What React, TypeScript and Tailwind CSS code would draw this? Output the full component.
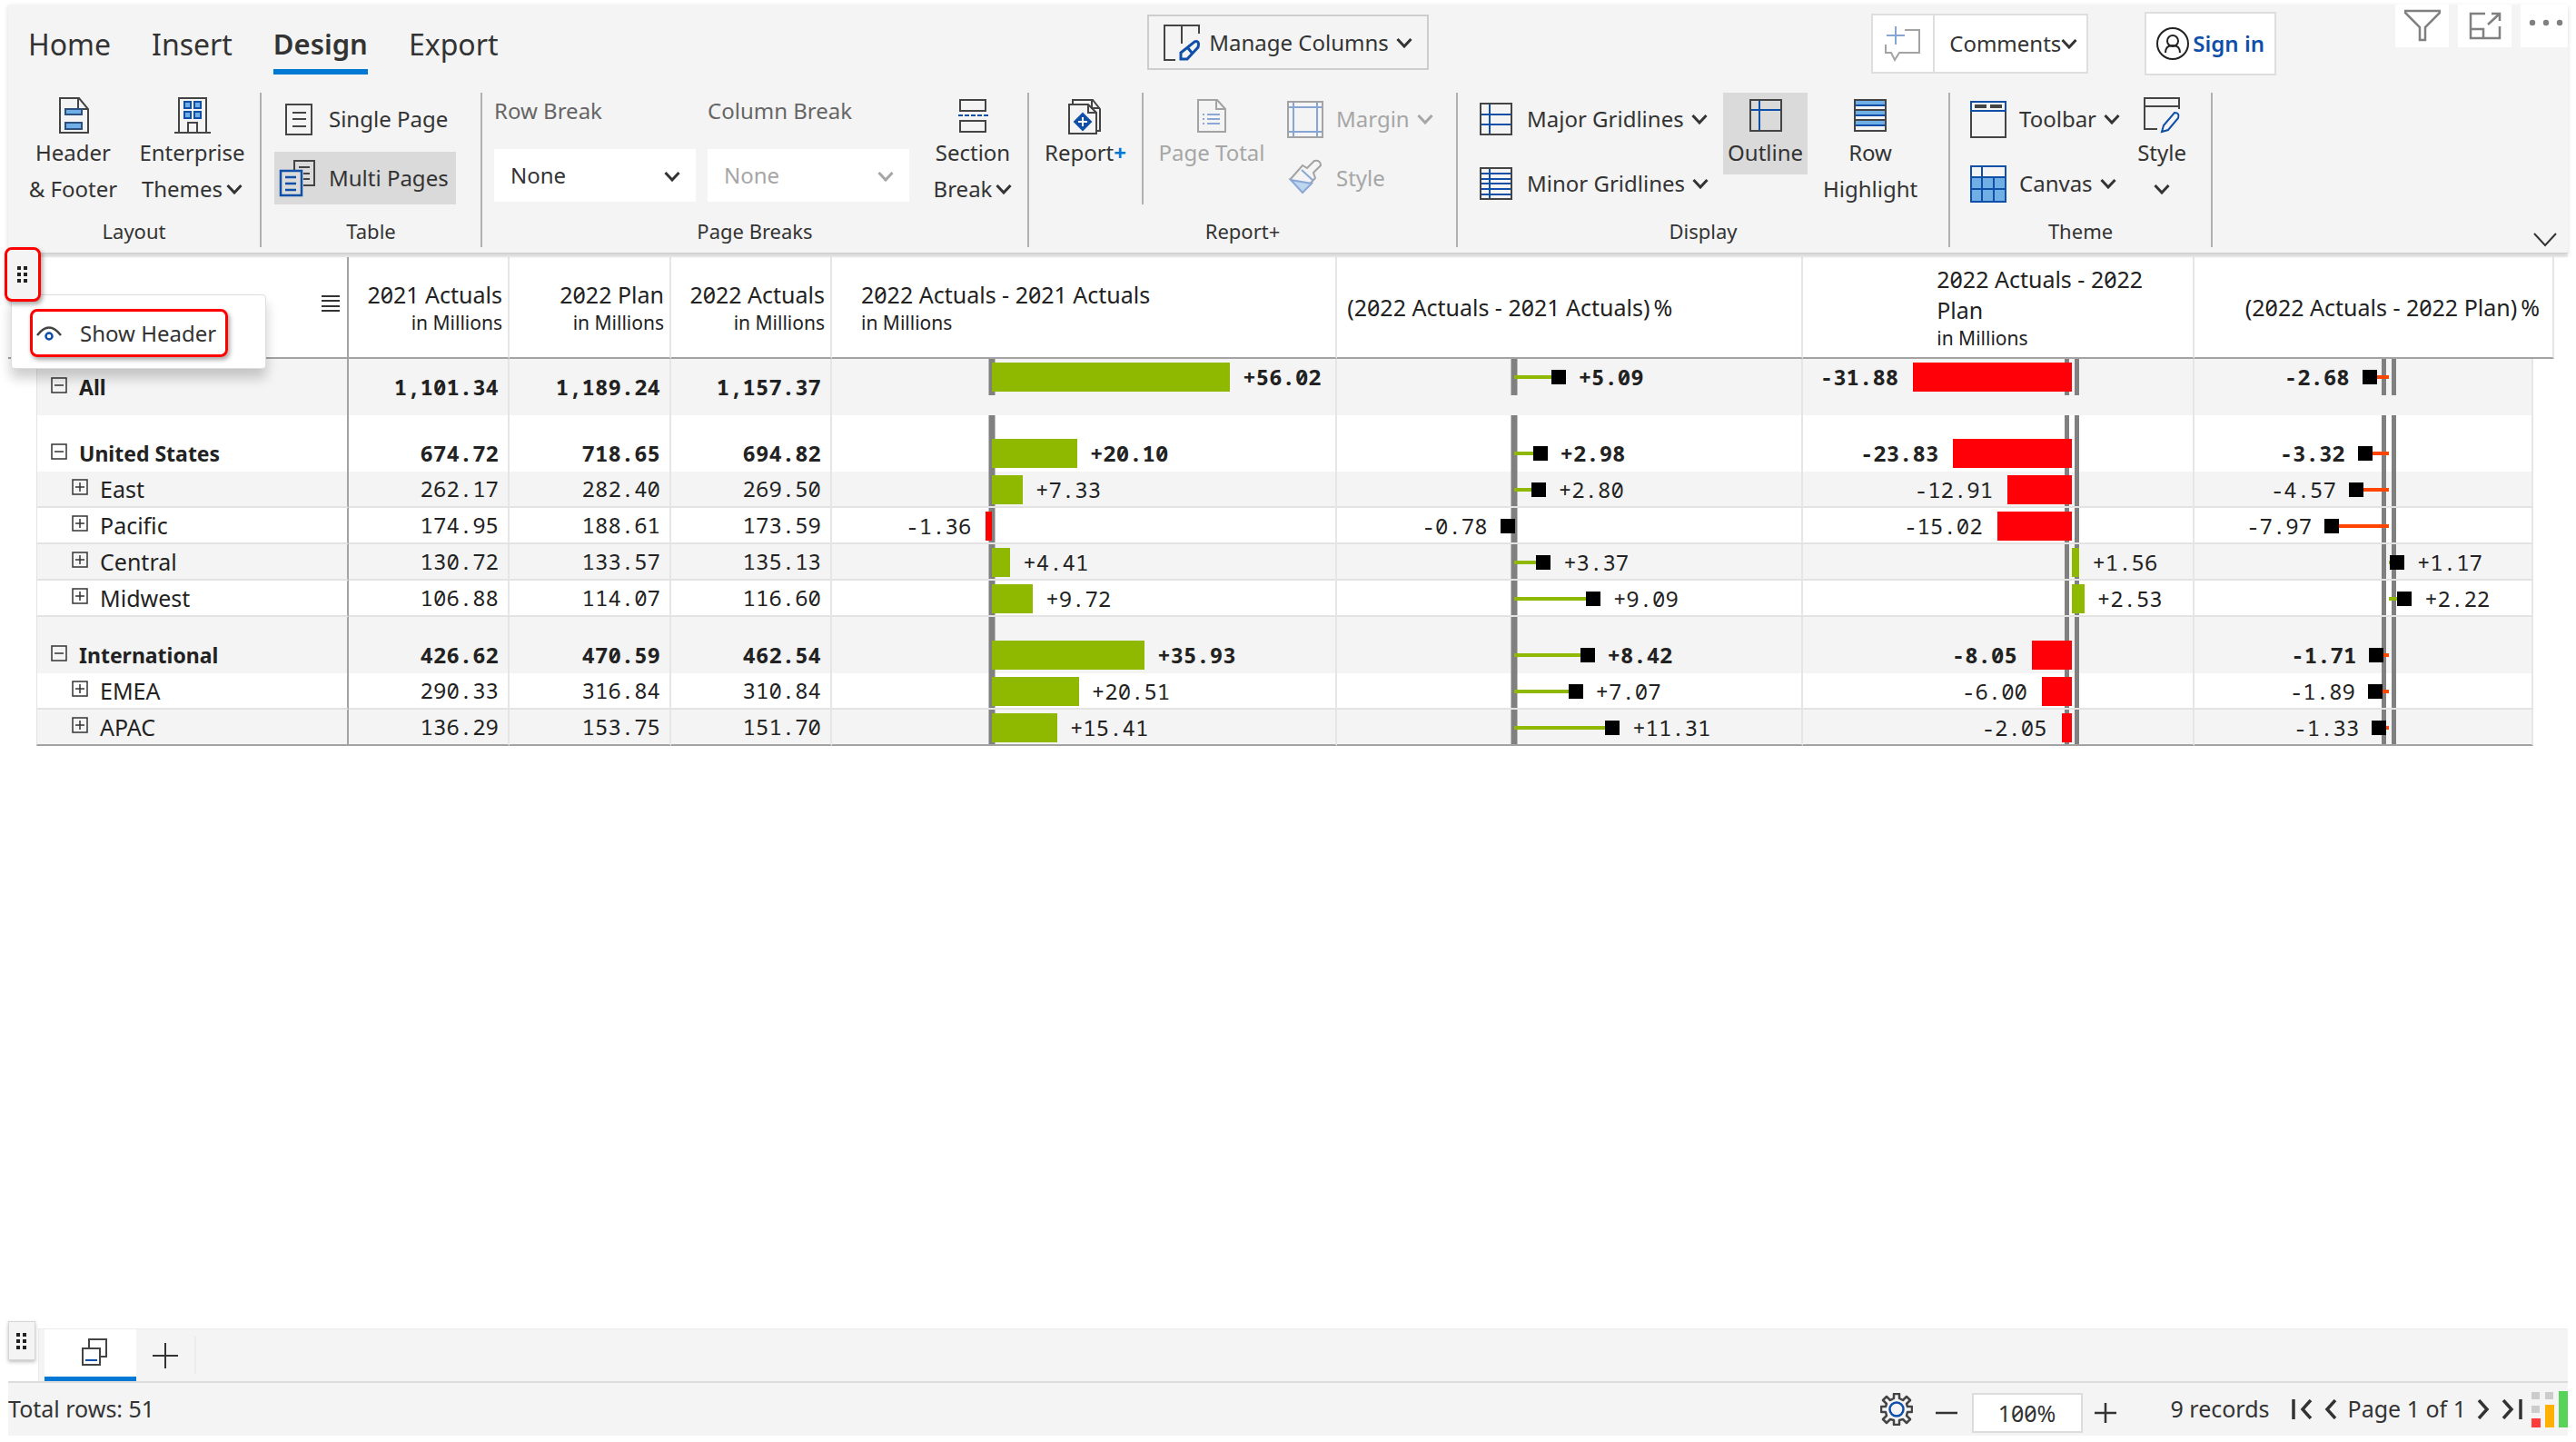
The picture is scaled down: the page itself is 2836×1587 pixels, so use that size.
import React from "react";

const INK = "#444444";
const BLUE = "#0f4fa8";
const SKY = "#70aee6";

type IconProps = { children: React.ReactNode; className?: string };

function Icon({ children, className = "" }: IconProps) {
  return (
    <svg
      aria-hidden="true"
      viewBox="0 0 40 40"
      fill="none"
      stroke={INK}
      strokeWidth="2"
      className={`size-10 shrink-0 overflow-visible ${className}`}
    >
      {children}
    </svg>
  );
}

function Chevron({ className = "" }: { className?: string }) {
  return (
    <svg
      aria-hidden="true"
      viewBox="0 0 18 12"
      fill="none"
      stroke="currentColor"
      strokeWidth="3"
      className={`h-3 w-[18px] shrink-0 ${className}`}
    >
      <path d="M1.5 2 9 10 16.5 2" />
    </svg>
  );
}

function Grip() {
  return (
    <svg aria-hidden="true" viewBox="0 0 12 18" fill="#222" className="h-[18px] w-3">
      {[0, 7, 14].map((y) => (
        <g key={y}>
          <rect x="0" y={y} width="4" height="4" />
          <rect x="7" y={y} width="4" height="4" />
        </g>
      ))}
    </svg>
  );
}

/* ---------- ribbon icons ---------- */

const HeaderFooterIcon = () => (
  <Icon>
    <path d="M5 1H26L36 13V39H5ZM25 1V13H36" />
    <g fill={SKY} stroke="#2b4f80">
      <rect x="11" y="13" width="18" height="6" />
      <rect x="11" y="28" width="18" height="7" />
    </g>
  </Icon>
);

const EnterpriseIcon = () => (
  <Icon>
    <path d="M0 39H40M5 39V1H35V39M15 39V28H25V39" />
    <g fill={SKY} stroke={BLUE}>
      <rect x="11" y="5" width="7" height="7" />
      <rect x="22" y="5" width="7" height="7" />
      <rect x="11" y="16" width="7" height="7" />
      <rect x="22" y="16" width="7" height="7" />
    </g>
  </Icon>
);

const SinglePageIcon = () => (
  <Icon>
    <path d="M7 4H35V37H7ZM14 13H29M14 20H29M14 28H29" />
  </Icon>
);

const MultiPagesIcon = () => (
  <Icon>
    <path d="M16 11V1H38V28H26M21 8H33M26 15H33M26 21H33" />
    <path d="M1 12H24V39H1ZM6 19H18M6 26H18M6 33H18" stroke={BLUE} strokeWidth="2.5" />
  </Icon>
);

const SectionBreakIcon = () => (
  <Icon>
    <rect x="6" y="3" width="28" height="12" />
    <rect x="6" y="26" width="28" height="12" />
    <path d="M4 20H37" stroke={BLUE} strokeDasharray="5 2" />
  </Icon>
);

const ReportPlusIcon = () => (
  <Icon>
    <path d="M6 7V3H28L36 13V37H32" />
    <path d="M27 3V12H36" />
    <path d="M2 8H23L32 17V40H2ZM23 8V17H32" fill="#f4f4f4" />
    <path d="M17 18 26 27 17 36 8 27Z" fill={BLUE} stroke={BLUE} />
    <path d="M17 22V32M12 27H22" stroke="#fff" />
  </Icon>
);

const PageTotalIcon = () => (
  <Icon>
    <path d="M5 3H26L35 13V38H5ZM25 3V13H35" stroke="#a3a3a3" />
    <path d="M10 19H12M15 19H29M10 24H12M15 24H29M10 29H12M15 29H29" stroke="#8aa7d6" />
  </Icon>
);

const MarginIcon = () => (
  <Icon>
    <rect x="1" y="1" width="38" height="39" stroke="#a3a3a3" />
    <path d="M7 2V39M33 2V39M2 7H38M2 34H38" stroke="#86a5d4" />
  </Icon>
);

const BrushIcon = () => (
  <Icon>
    <path d="M3 22 17 6 22 9 30 1Q37 0 37 6L29 14 31 20 18 34" stroke="#a3a3a3" />
    <path d="M16 11 29 23" stroke="#8aa7d6" />
    <path d="M4 22 27 26 17 36Z" fill="#bcd6f0" stroke="#8aa7d6" />
  </Icon>
);

const MajorGridIcon = () => (
  <Icon>
    <path d="M13 3V37M3 15H37M3 26H37" stroke={BLUE} />
    <rect x="3" y="3" width="34" height="34" />
  </Icon>
);

const MinorGridIcon = () => (
  <Icon>
    <path d="M13 3V37M3 9H37M3 15H37M3 20H37M3 26H37M3 32H37" stroke={BLUE} />
    <rect x="3" y="3" width="34" height="34" />
  </Icon>
);

const OutlineIcon = () => (
  <Icon>
    <path d="M13 3V37M3 14H37" stroke={BLUE} />
    <rect x="3" y="3" width="34" height="34" />
  </Icon>
);

const RowHighlightIcon = () => (
  <Icon>
    <g fill={SKY} stroke="none">
      <rect x="3" y="3" width="34" height="6" />
      <rect x="3" y="14" width="34" height="6" />
      <rect x="3" y="25" width="34" height="6" />
    </g>
    <path d="M3 14H37M3 25H37" />
    <path d="M3 9H37M3 20H37M3 31H37" stroke={BLUE} />
    <rect x="3" y="3" width="34" height="34" />
  </Icon>
);

const ToolbarIcon = () => (
  <Icon>
    <rect x="1" y="11" width="38" height="29" />
    <rect x="1" y="1" width="38" height="10" stroke={BLUE} />
    <path d="M5 6H18M22 6H35" strokeWidth="4" />
  </Icon>
);

const CanvasIcon = () => (
  <Icon>
    <rect x="1" y="13" width="38" height="27" fill={SKY} stroke="none" />
    <path d="M1 1H39V40H1ZM13 1V40M26 13V40M1 13H39M1 26H39" stroke={BLUE} />
  </Icon>
);

const PageStyleIcon = () => (
  <Icon>
    <path d="M39 13V1H1V35H15M1 10H39" />
    <path d="M20 38 22 31 34 17Q40 17 38 23L27 36Z" stroke={BLUE} />
  </Icon>
);

const ManageIcon = () => (
  <Icon>
    <path d="M39 10V1H1V39H13M20 1V21" />
    <path d="M19 38V31L34 19Q40 17 38 25L26 38ZM27 26 31 31" stroke={BLUE} strokeWidth="3" />
  </Icon>
);

/* ---------- ribbon building blocks ---------- */

type TallButtonProps = {
  icon: React.ReactNode;
  lines: React.ReactNode[];
  className?: string;
  disabled?: boolean;
};

function TallButton({ icon, lines, className = "", disabled }: TallButtonProps) {
  return (
    <button
      type="button"
      disabled={disabled}
      className={`flex shrink-0 flex-col items-center self-start pt-[5px] leading-10 whitespace-nowrap disabled:text-[#a6a6a6] ${className}`}
    >
      <span className="mb-px">{icon}</span>
      {lines.map((line, i) => (
        <span key={i} className="flex items-center gap-1">
          {line}
        </span>
      ))}
    </button>
  );
}

type RowButtonProps = {
  icon: React.ReactNode;
  label: string;
  menu?: boolean;
  active?: boolean;
  disabled?: boolean;
  className?: string;
};

function RowButton({ icon, label, menu, active, disabled, className = "" }: RowButtonProps) {
  return (
    <button
      type="button"
      disabled={disabled}
      className={`flex h-[58px] shrink-0 items-center gap-3.5 whitespace-nowrap disabled:text-[#a6a6a6] ${
        active ? "bg-[#dadada]" : ""
      } ${className}`}
    >
      {icon}
      <span className="flex items-center gap-2">
        {label}
        {menu && <Chevron />}
      </span>
    </button>
  );
}

function Group({ label, className = "", children }: { label: string; className?: string; children: React.ReactNode }) {
  return (
    <section
      aria-label={label}
      className={`flex h-[170px] shrink-0 flex-col justify-between border-r-2 border-[#b0b0b0] ${className}`}
    >
      <div className="flex h-[130px]">{children}</div>
      <div className="text-center text-[22px] leading-9">{label}</div>
    </section>
  );
}

function BreakSelect({ label, id, disabled }: { label: string; id: string; disabled?: boolean }) {
  return (
    <div className="w-[222px]">
      <label htmlFor={id} className="block leading-10 text-[#666]">
        {label}
      </label>
      <div className="relative mt-[22px]">
        <select
          id={id}
          disabled={disabled}
          className="h-[58px] w-full appearance-none bg-white pl-[18px] disabled:text-[#a6a6a6] disabled:opacity-100"
        >
          <option>None</option>
        </select>
        <Chevron className={`pointer-events-none absolute top-6 right-[17px] ${disabled ? "text-[#a6a6a6]" : ""}`} />
      </div>
    </div>
  );
}

function Ribbon() {
  const tabs = ["Home", "Insert", "Design", "Export"];
  return (
    <header className="relative z-10 border-b border-[#cfcfcf] bg-[#f4f4f4] text-2xl text-[#333] shadow-[0_2px_5px_rgba(0,0,0,0.15)]">
      <div className="grid h-[97px] grid-cols-[1fr_auto_1fr] items-start">
        <nav className="flex gap-[45px] pt-4 pl-[22px] text-[32px]">
          {tabs.map((tab) => (
            <a
              key={tab}
              href={`#${tab.toLowerCase()}`}
              className={
                tab === "Design"
                  ? "border-b-[6px] border-[#0078d4] text-[31px] leading-[55px] font-semibold"
                  : "leading-[55px]"
              }
            >
              {tab}
            </a>
          ))}
        </nav>

        <button type="button" className="mt-[11px] flex h-[61px] items-center gap-2.5 border-2 border-[#cdcdcd] px-4">
          <ManageIcon />
          <span className="flex items-center gap-2">
            Manage Columns
            <Chevron />
          </span>
        </button>

        <div className="flex items-start justify-end whitespace-nowrap">
          <div className="mt-[10px] mr-[62px] flex h-[66px] border-2 border-[#dedede] bg-white">
            <button type="button" aria-label="Add comment" className="flex w-[68px] items-center justify-center border-r-2 border-[#dedede]">
              <Icon>
                <path d="M22 5H38V30H16L11 38 7 30H1V21" stroke="#a3a3a3" />
                <path d="M12 1V21M2 11H22" stroke="#86a5d4" />
              </Icon>
            </button>
            <button type="button" className="flex items-center px-[10px] pl-4">
              Comments
              <Chevron />
            </button>
          </div>
          <button type="button" className="mt-2 mr-[131px] flex h-[70px] items-center gap-1 border-2 border-[#dedede] bg-white px-[11px] font-semibold text-[#0f4fa8]">
            <svg aria-hidden="true" viewBox="0 0 36 36" fill="none" stroke="#222" strokeWidth="2" className="size-9">
              <circle cx="18" cy="18" r="17" />
              <circle cx="18" cy="15" r="6" />
              <path d="M10 28Q10 20 18 20T26 28" />
            </svg>
            Sign in
          </button>
          <div className="flex gap-[10px] text-[#808080]">
            <button type="button" aria-label="Filter" className="flex h-[47px] w-[59px] justify-center bg-white pt-[5px]">
              <svg aria-hidden="true" viewBox="0 0 40 36" fill="none" stroke="currentColor" strokeWidth="2.5" className="h-9 w-10">
                <path d="M1 2H39V4L23 20V34H17V20L1 4Z" />
              </svg>
            </button>
            <button type="button" aria-label="Focus mode" className="flex h-[47px] w-[59px] justify-center bg-white pt-2">
              <svg aria-hidden="true" viewBox="0 0 36 31" fill="none" stroke="currentColor" strokeWidth="2.5" className="h-[31px] w-9">
                <path d="M18 2H2V29H34V16M2 19H16V29M25 2H34V10M34 2 21 14" />
              </svg>
            </button>
            <button type="button" aria-label="More options" className="flex h-[47px] w-[52px] justify-center bg-white pt-[15px] pl-1">
              <svg aria-hidden="true" viewBox="0 0 38 10" fill="currentColor" className="h-[10px] w-[38px]">
                <circle cx="4" cy="5" r="3.2" />
                <circle cx="19" cy="5" r="3.2" />
                <circle cx="34" cy="5" r="3.2" />
              </svg>
            </button>
          </div>
        </div>
      </div>

      <div className="flex pb-[6px]">
        <Group label="Layout" className="w-[279px]">
          <TallButton icon={<HeaderFooterIcon />} lines={["Header", "& Footer"]} className="ml-1.5 w-[131px]" />
          <TallButton
            icon={<EnterpriseIcon />}
            lines={["Enterprise", <React.Fragment key="t">Themes <Chevron /></React.Fragment>]}
            className="w-[131px]"
          />
        </Group>

        <Group label="Table" className="w-[243px]">
          <div className="flex flex-col gap-[7px] pl-3.5">
            <RowButton icon={<SinglePageIcon />} label="Single Page" className="w-[200px] pl-1.5" />
            <RowButton icon={<MultiPagesIcon />} label="Multi Pages" active className="w-[200px] pl-1.5" />
          </div>
        </Group>

        <Group label="Page Breaks" className="w-[602px]">
          <div className="flex gap-[13px] pl-[13px]">
            <BreakSelect label="Row Break" id="row-break" />
            <BreakSelect label="Column Break" id="column-break" disabled />
            <TallButton
              icon={<SectionBreakIcon />}
              lines={["Section", <React.Fragment key="b">Break <Chevron /></React.Fragment>]}
              className="w-[114px]"
            />
          </div>
        </Group>

        <Group label="Report+" className="w-[472px]">
          <div className="h-[123px] w-[126px] border-r-2 border-[#b0b0b0]">
            <TallButton
              icon={<ReportPlusIcon />}
              lines={[
                <span key="r">
                  Report<span className="font-bold text-[#0078d4]">+</span>
                </span>,
              ]}
              className="w-[124px]"
            />
          </div>
          <TallButton icon={<PageTotalIcon />} lines={["Page Total"]} disabled className="w-[150px]" />
          <div className="flex flex-col gap-[7px] pl-2">
            <RowButton icon={<MarginIcon />} label="Margin" menu disabled />
            <RowButton icon={<BrushIcon />} label="Style" disabled />
          </div>
        </Group>

        <Group label="Display" className="w-[542px]">
          <div className="mr-4 flex flex-col gap-[13px] pl-[22px]">
            <RowButton icon={<MajorGridIcon />} label="Major Gridlines" menu />
            <RowButton icon={<MinorGridIcon />} label="Minor Gridlines" menu />
          </div>
          <TallButton icon={<OutlineIcon />} lines={["Outline"]} className="w-[93px] bg-[#dadada] pb-1" />
          <TallButton icon={<RowHighlightIcon />} lines={["Row", "Highlight"]} className="w-[138px]" />
        </Group>

        <Group label="Theme" className="w-[289px]">
          <div className="flex flex-col gap-[13px] pl-[22px]">
            <RowButton icon={<ToolbarIcon />} label="Toolbar" menu />
            <RowButton icon={<CanvasIcon />} label="Canvas" menu />
          </div>
          <TallButton
            icon={<PageStyleIcon />}
            lines={["Style", <Chevron key="c" className="my-[14px]" />]}
            className="w-[92px]"
          />
        </Group>

        <button type="button" aria-label="Collapse ribbon" className="mr-3 ml-auto self-end">
          <svg aria-hidden="true" viewBox="0 0 26 16" fill="none" stroke="#333" strokeWidth="2" className="h-4 w-[26px]">
            <path d="M1 1 13 14 25 1" />
          </svg>
        </button>
      </div>
    </header>
  );
}

/* ---------- table ---------- */

type Row = {
  name: string;
  level: 0 | 1;
  place: "top" | "bottom" | "plain";
  values: [string, string, string];
  deltas: [string, string, string, string];
};

const rows: Row[] = [
  { name: "All", level: 0, place: "top", values: ["1,101.34", "1,189.24", "1,157.37"], deltas: ["+56.02", "+5.09", "-31.88", "-2.68"] },
  { name: "United States", level: 0, place: "bottom", values: ["674.72", "718.65", "694.82"], deltas: ["+20.10", "+2.98", "-23.83", "-3.32"] },
  { name: "East", level: 1, place: "plain", values: ["262.17", "282.40", "269.50"], deltas: ["+7.33", "+2.80", "-12.91", "-4.57"] },
  { name: "Pacific", level: 1, place: "plain", values: ["174.95", "188.61", "173.59"], deltas: ["-1.36", "-0.78", "-15.02", "-7.97"] },
  { name: "Central", level: 1, place: "plain", values: ["130.72", "133.57", "135.13"], deltas: ["+4.41", "+3.37", "+1.56", "+1.17"] },
  { name: "Midwest", level: 1, place: "plain", values: ["106.88", "114.07", "116.60"], deltas: ["+9.72", "+9.09", "+2.53", "+2.22"] },
  { name: "International", level: 0, place: "bottom", values: ["426.62", "470.59", "462.54"], deltas: ["+35.93", "+8.42", "-8.05", "-1.71"] },
  { name: "EMEA", level: 1, place: "plain", values: ["290.33", "316.84", "310.84"], deltas: ["+20.51", "+7.07", "-6.00", "-1.89"] },
  { name: "APAC", level: 1, place: "plain", values: ["136.29", "153.75", "151.70"], deltas: ["+15.41", "+11.31", "-2.05", "-1.33"] },
];

/* origin and scale are percentages of the column's width */
type Chart = { kind: "bar" | "pin"; origin: number; scale: number; double: boolean; loss: string };

const charts: Chart[] = [
  { kind: "bar", origin: 31.7, scale: 0.846, double: false, loss: "bg-[#ff0000]" },
  { kind: "pin", origin: 38.1, scale: 1.87, double: false, loss: "bg-[#ff4500]" },
  { kind: "bar", origin: 68.9, scale: 1.278, double: true, loss: "bg-[#ff0008]" },
  { kind: "pin", origin: 57.6, scale: 2.12, double: true, loss: "bg-[#ff4500]" },
];

function VarianceChart({ chart, text, place }: { chart: Chart; text: string; place: Row["place"] }) {
  const value = Number(text);
  const size = Math.abs(value) * chart.scale;
  const up = value > 0;
  const span = up
    ? { left: `${chart.origin}%`, width: `${size}%` }
    : { right: `${100 - chart.origin}%`, width: `${size}%` };
  return (
    <div className={`absolute inset-x-0 ${place === "top" ? "top-0 h-10" : "inset-y-0"}`}>
      <div
        className={`absolute inset-y-0 -translate-x-1/2 ${
          chart.double ? "w-4 border-x-[5px] border-[#808080]" : "w-[7px] bg-[#808080]"
        }`}
        style={{ left: `${chart.origin}%` }}
      />
      <div
        className={`absolute inset-x-0 ${
          place === "top" ? "top-1 h-8" : place === "bottom" ? "bottom-1 h-8" : "bottom-0.5 h-8"
        }`}
      >
        <div className="absolute inset-y-0 flex items-center" style={span}>
          {chart.kind === "bar" ? (
            <div className={`h-8 w-full ${up ? "bg-[#8fb900]" : chart.loss}`} />
          ) : (
            <>
              <div className={`h-1 w-full ${up ? "bg-[#8fb900]" : chart.loss}`} />
              <div className={`absolute size-4 bg-black ${up ? "left-full -translate-x-1/2" : "right-full translate-x-1/2"}`} />
            </>
          )}
          <span
            className={`absolute leading-8 ${
              up
                ? chart.kind === "bar" ? "left-full ml-[14px]" : "left-full ml-[22px]"
                : chart.kind === "bar" ? "right-full mr-4" : "right-full mr-[22px]"
            }`}
          >
            {text}
          </span>
        </div>
      </div>
    </div>
  );
}

function Toggle({ open }: { open: boolean }) {
  return (
    <button type="button" aria-label={open ? "Collapse" : "Expand"} className="size-[18px] shrink-0">
      <svg aria-hidden="true" viewBox="0 0 18 18" fill="none" stroke="#333" strokeWidth="1.5" className="size-[18px]">
        <rect x="1" y="1" width="16" height="16" />
        <path d={open ? "M4 9H14" : "M4 9H14M9 4V14"} />
      </svg>
    </button>
  );
}

const headCell = "h-28 border-r-2 border-b-2 border-r-[#e6e6e6] border-b-[#a3a3a3] font-normal leading-[34px]";
const sub = "block text-[21px] leading-7";

function VarianceTable() {
  return (
    <table className="w-full table-fixed border-separate border-spacing-0 text-[25px] text-[#222]">
      <colgroup>
        <col className="w-[31px]" />
        <col className="w-[344px]" />
        <col className="w-[177px]" />
        <col className="w-[178px]" />
        <col className="w-[177px]" />
        <col className="w-[29.7%]" />
        <col className="w-[27.4%]" />
        <col className="w-[23%]" />
        <col className="w-[19.9%]" />
        <col className="w-[23px]" />
      </colgroup>
      <thead className="slashed-zero">
        <tr>
          <th colSpan={2} className="border-r-2 border-b-2 border-[#a3a3a3] pr-2 text-right">
            <button type="button" aria-label="Row options" className="mb-4">
              <svg aria-hidden="true" viewBox="0 0 20 20" stroke="#333" strokeWidth="2" className="size-5">
                <path d="M0 2H20M0 7H20M0 13H20M0 18H20" />
              </svg>
            </button>
          </th>
          {["2021 Actuals", "2022 Plan", "2022 Actuals"].map((name) => (
            <th key={name} scope="col" className={`${headCell} pr-[6px] text-right whitespace-nowrap`}>
              {name}
              <span className={sub}>in Millions</span>
            </th>
          ))}
          <th scope="col" className={`${headCell} pl-8 text-left`}>
            2022 Actuals - 2021 Actuals
            <span className={sub}>in Millions</span>
          </th>
          <th scope="col" className={`${headCell} pl-[11px] text-left`}>
            (2022 Actuals - 2021 Actuals)<span className="pl-1">%</span>
          </th>
          <th scope="col" className={`${headCell} text-left`}>
            <div className="ml-auto w-[282px] pr-8">
              2022 Actuals - 2022 Plan
              <span className={sub}>in Millions</span>
            </div>
          </th>
          <th scope="col" colSpan={2} className={`${headCell} pr-[14px] text-right whitespace-nowrap`}>
            (2022 Actuals - 2022 Plan)<span className="pl-1">%</span>
          </th>
        </tr>
      </thead>
      <tbody>
        {rows.map((row, i) => {
          const last = i === rows.length - 1;
          const major = row.level === 0;
          const line = last
            ? "border-b-2 border-b-[#a3a3a3]"
            : major
              ? ""
              : "border-b-2 border-b-[#e3e3e3]";
          const cell = `${i % 2 === 0 ? "bg-[#f4f4f4]" : "bg-white"} ${line} ${
            row.place === "bottom" ? "pt-[22px]" : ""
          }`;
          const weight = major ? "font-bold" : "";
          return (
            <tr key={row.name} className={major ? "h-[62px]" : "h-10"}>
              <td />
              <th
                scope="row"
                className={`${cell} border-r-2 border-l border-r-[#a3a3a3] border-l-[#e3e3e3] p-0 text-left leading-[38px] ${
                  major ? "text-[23px] font-bold" : "font-normal"
                }`}
              >
                <div className={`flex gap-[13px] ${major ? "pl-[15px]" : "pl-[38px]"}`}>
                  <span className="flex pt-[8px]">
                    <Toggle open={major} />
                  </span>
                  {row.name}
                </div>
              </th>
              {row.values.map((value, j) => (
                <td
                  key={j}
                  className={`${cell} ${weight} border-r-2 border-r-[#e6e6e6] pr-[10px] text-right font-['Noto_Sans_Mono','DejaVu_Sans_Mono',monospace] text-2xl leading-[38px]`}
                >
                  {value}
                </td>
              ))}
              {row.deltas.map((delta, j) => (
                <td
                  key={j}
                  className={`${cell} ${weight} relative border-r-2 border-r-[#e6e6e6] font-['Noto_Sans_Mono','DejaVu_Sans_Mono',monospace] text-2xl`}
                >
                  <VarianceChart chart={charts[j]} text={delta} place={row.place} />
                </td>
              ))}
              <td />
            </tr>
          );
        })}
      </tbody>
    </table>
  );
}

/* ---------- floating header handle and its menu ---------- */

function HeaderHandle() {
  return (
    <div className="absolute top-0 left-0 z-20">
      <button
        type="button"
        aria-label="Header options"
        className="absolute -top-[7px] -left-1 z-10 flex h-[60px] w-10 items-center justify-center rounded-lg border-[3px] border-[#ff0000] bg-[#f4f4f4] shadow-[2px_3px_5px_rgba(0,0,0,0.35)]"
      >
        <Grip />
      </button>
      <div className="absolute top-[45px] left-[3px] h-[82px] w-[281px] rounded border border-[#ddd] bg-white pt-[15px] pl-5 shadow-[0_10px_14px_rgba(0,0,0,0.2)]">
        <button
          type="button"
          className="flex h-[53px] w-[218px] items-center gap-5 rounded-lg border-[3px] border-[#ff0000] pl-1 text-2xl whitespace-nowrap text-[#333] shadow-[2px_3px_5px_rgba(0,0,0,0.35)]"
        >
          <svg aria-hidden="true" viewBox="0 0 28 18" fill="none" stroke={INK} strokeWidth="2.5" className="h-[18px] w-7">
            <path d="M1 11Q14-6 27 11" />
            <circle cx="14" cy="12" r="3.5" stroke={BLUE} />
          </svg>
          Show Header
        </button>
      </div>
    </div>
  );
}

/* ---------- bottom bars ---------- */

function SheetBar() {
  return (
    <div className="relative flex h-[60px] border-b-2 border-[#dcdcdc] pl-[33px]">
      <button
        type="button"
        aria-label="Sheet bar options"
        className="absolute -top-2 left-0 flex h-[43px] w-[30px] items-center justify-center border border-[#d6d6d6] bg-[#f4f4f4] shadow-[0_2px_4px_rgba(0,0,0,0.25)]"
      >
        <Grip />
      </button>
      <div className="flex grow items-stretch border-t border-l border-[#ececec] bg-[#f4f4f4] pl-[6px]">
        <button
          type="button"
          aria-label="Sheet 1"
          className="flex w-[101px] items-start justify-center border-b-[5px] border-[#0078d4] bg-white pt-2.5 pl-2"
        >
          <svg aria-hidden="true" viewBox="0 0 28 30" fill="none" stroke={INK} strokeWidth="2" className="h-[30px] w-7">
            <path d="M8 11V1H27V20H21M1 11H20V29H1Z" />
            <path d="M4 24H17" stroke={BLUE} />
          </svg>
        </button>
        <button type="button" aria-label="Add sheet" className="my-2 flex w-[66px] items-center justify-center border-r-2 border-[#ececec]">
          <svg aria-hidden="true" viewBox="0 0 28 28" stroke="#333" strokeWidth="2" className="size-7">
            <path d="M14 0V28M0 14H28" />
          </svg>
        </button>
      </div>
    </div>
  );
}

function PagerIcon({ d, label, wide }: { d: string; label: string; wide?: boolean }) {
  return (
    <button type="button" aria-label={label}>
      <svg
        aria-hidden="true"
        viewBox={wide ? "0 0 24 22" : "0 0 14 22"}
        fill="none"
        stroke="#333"
        strokeWidth="3.5"
        className={wide ? "h-[22px] w-6" : "h-[22px] w-3.5"}
      >
        <path d={d} />
      </svg>
    </button>
  );
}

function StatusBar() {
  return (
    <footer className="mb-[7px] flex h-[58px] items-center bg-[#f4f4f4] text-[25px] whitespace-nowrap text-[#333]">
      <span>Total rows: 51</span>
      <button type="button" aria-label="Settings" className="ml-auto">
        <svg
          aria-hidden="true"
          viewBox="0 0 36 36"
          fill="none"
          stroke={INK}
          strokeWidth="2.5"
          strokeLinejoin="round"
          className="size-9"
        >
          <path d="M15 1H21V6L25 8 29 4 33 8 29 12 30 15H35V21H30L29 25 33 29 29 33 25 29 21 30V35H15V30L11 29 7 33 3 29 7 25 6 21H1V15H6L7 12 3 8 7 4 11 8 15 6Z" />
          <circle cx="18" cy="18" r="7.5" stroke={BLUE} />
        </svg>
      </button>
      <button type="button" aria-label="Zoom out" className="ml-[25px]">
        <svg aria-hidden="true" viewBox="0 0 24 24" stroke="#333" strokeWidth="2.5" className="size-6">
          <path d="M0 16H24" />
        </svg>
      </button>
      <input
        aria-label="Zoom"
        defaultValue="100%"
        className="mt-2 ml-4 h-[44px] w-[122px] border-2 border-[#dcdcdc] bg-white text-center slashed-zero"
      />
      <button type="button" aria-label="Zoom in" className="mt-2 ml-[13px]">
        <svg aria-hidden="true" viewBox="0 0 24 24" stroke="#333" strokeWidth="2.5" className="size-6">
          <path d="M0 12H24M12 1V23" />
        </svg>
      </button>
      <span className="ml-[60px]">9 records</span>
      <div className="ml-6 flex items-center gap-3">
        <PagerIcon wide label="First page" d="M2 0V22M21 1 12 11 21 21" />
        <PagerIcon label="Previous page" d="M12 1 3 11 12 21" />
        <span>Page 1 of 1</span>
        <PagerIcon label="Next page" d="M2 1 11 11 2 21" />
        <PagerIcon wide label="Last page" d="M3 1 12 11 3 21M22 0V22" />
      </div>
      <svg aria-hidden="true" viewBox="0 0 40 40" className="ml-[10px] size-10">
        <g fill="#cccccc">
          <rect x="0" y="1" width="9" height="8" />
          <rect x="15" y="1" width="9" height="8" />
          <rect x="0" y="16" width="9" height="8" />
        </g>
        <rect x="0" y="30" width="10" height="10" fill="#ff3b3b" />
        <rect x="15" y="15" width="10" height="25" fill="#ffb000" />
        <rect x="30" y="0" width="10" height="40" fill="#57d357" />
      </svg>
    </footer>
  );
}

export default function App() {
  return (
    <div className="flex min-h-screen flex-col bg-white px-[9px] pt-[5px] font-['Noto_Sans',sans-serif]">
      <Ribbon />
      <main className="relative flex grow flex-col">
        <div className="h-1 bg-[#f0f0f0]" />
        <div className="mr-[15px]">
          <VarianceTable />
        </div>
        <HeaderHandle />
      </main>
      <SheetBar />
      <StatusBar />
    </div>
  );
}
